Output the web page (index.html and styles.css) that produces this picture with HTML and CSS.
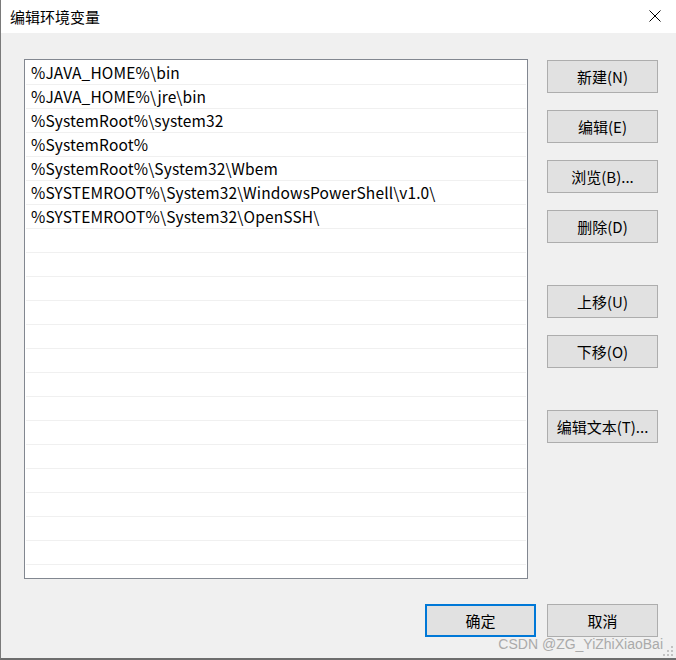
FILE: index.html
```html
<!DOCTYPE html>
<html lang="zh-CN">
<head>
    <meta charset="UTF-8">
    <title>编辑环境变量</title>
    <link rel="stylesheet" href="styles.css">
</head>
<body>
    <div class="window">
        <div class="titlebar">
            <span class="title">编辑环境变量</span>
            <svg class="close" width="12" height="12" viewBox="0 0 12 12">
                <path d="M0.5 0.5 L11.5 11.5 M11.5 0.5 L0.5 11.5" stroke="#000" stroke-width="1" fill="none"/>
            </svg>
        </div>

        <div class="content">
            <div class="list">
                <div class="row">%JAVA_HOME%\bin</div>
                <div class="row">%JAVA_HOME%\jre\bin</div>
                <div class="row">%SystemRoot%\system32</div>
                <div class="row">%SystemRoot%</div>
                <div class="row">%SystemRoot%\System32\Wbem</div>
                <div class="row">%SYSTEMROOT%\System32\WindowsPowerShell\v1.0\</div>
                <div class="row">%SYSTEMROOT%\System32\OpenSSH\</div>
                <div class="row"></div>
                <div class="row"></div>
                <div class="row"></div>
                <div class="row"></div>
                <div class="row"></div>
                <div class="row"></div>
                <div class="row"></div>
                <div class="row"></div>
                <div class="row"></div>
                <div class="row"></div>
                <div class="row"></div>
                <div class="row"></div>
                <div class="row"></div>
                <div class="row"></div>
                <div class="row"></div>
            </div>

            <div class="side">
                <button class="btn">新建(N)</button>
                <button class="btn">编辑(E)</button>
                <button class="btn">浏览(B)...</button>
                <button class="btn">删除(D)</button>
                <button class="btn group">上移(U)</button>
                <button class="btn">下移(O)</button>
                <button class="btn group">编辑文本(T)...</button>
            </div>
        </div>

        <div class="footer">
            <button class="btn default">确定</button>
            <button class="btn">取消</button>
        </div>

        <div class="watermark">CSDN @ZG_YiZhiXiaoBai</div>
        <svg class="grip" width="11" height="11" viewBox="0 0 11 11">
            <g fill="#c2c2c2">
                <rect x="8" y="0" width="2" height="2"/>
                <rect x="4" y="4" width="2" height="2"/>
                <rect x="8" y="4" width="2" height="2"/>
                <rect x="0" y="8" width="2" height="2"/>
                <rect x="4" y="8" width="2" height="2"/>
                <rect x="8" y="8" width="2" height="2"/>
            </g>
        </svg>
    </div>
</body>
</html>
```

FILE: styles.css
```css
html, body { margin: 0; padding: 0; }
body {
    font-family: "Noto Sans CJK SC", "Liberation Sans", sans-serif;
    font-size: 15px;
    color: #000;
    background: #f0f0f0;
}
.window {
    position: relative;
    width: 676px;
    height: 660px;
    box-sizing: border-box;
    background: #f0f0f0;
    border-left: 1px solid #7a7a7a;
    border-bottom: 2px solid #6d6d6d;
    overflow: hidden;
}

.titlebar {
    height: 33px;
    background: #fff;
    display: flex;
    align-items: center;
    justify-content: space-between;
    padding: 0 15px 0 9px;
}
.title { font-size: 15px; line-height: 33px; }
.close { display: block; margin-top: -1px; }

.content {
    display: flex;
    gap: 19px;
    padding: 26px 0 0 23px;
}
.list {
    width: 504px;
    height: 520px;
    box-sizing: border-box;
    background: #fff;
    border: 1px solid #828790;
    padding: 1px;
    overflow: hidden;
}
.row {
    height: 24px;
    box-sizing: border-box;
    border-bottom: 1px solid #f0f0f0;
    padding-left: 5px;
    font-size: 15.5px;
    letter-spacing: 0.15px;
    line-height: 23px;
    white-space: nowrap;
}

.side {
    display: flex;
    flex-direction: column;
    padding-top: 1px;
}
.btn {
    width: 111px;
    height: 33px;
    margin: 0;
    padding: 0;
    background: #e1e1e1;
    border: 1px solid #adadad;
    font-family: inherit;
    font-size: 15px;
    color: #000;
}
.side .btn { margin-bottom: 17px; }
.side .btn.group { margin-top: 25px; }
.btn.default { border: 2px solid #0078d7; }

.footer {
    display: flex;
    justify-content: flex-end;
    gap: 11px;
    padding: 25px 18px 0 0;
}

.watermark {
    position: absolute;
    right: 13px;
    top: 636px;
    font-family: "Liberation Sans", sans-serif;
    font-size: 14px;
    color: #aaa;
    white-space: nowrap;
}
.grip {
    position: absolute;
    right: 2px;
    bottom: 1px;
}
```
